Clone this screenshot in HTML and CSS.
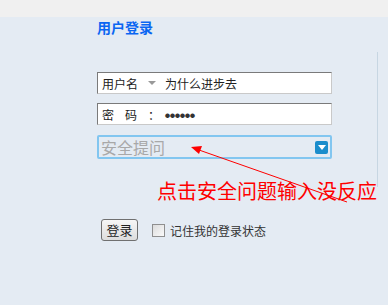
FILE: index.html
```html
<!DOCTYPE html>
<html lang="zh-CN">
<head>
    <meta charset="UTF-8">
    <title>用户登录</title>
    <link rel="stylesheet" href="styles.css">
</head>
<body>
    <div class="topbar"></div>
    <div class="panel">
        <div class="login">
            <h2 class="titulo">用户登录</h2>

            <div class="campo campo-user">
                <span class="etiqueta">用户名</span>
                <span class="caret"></span>
                <span class="valor">为什么进步去</span>
            </div>

            <div class="campo campo-pass">
                <span class="etiqueta pass">密<i></i>码<i></i>：</span>
                <span class="puntos">●●●●●●</span>
            </div>

            <div class="pregunta">
                <span class="placeholder">安全提问</span>
                <span class="flecha"></span>
            </div>

            <p class="nota">点击安全问题输入没反应</p>

            <div class="acciones">
                <button class="btn">登录</button>
                <label class="recordar"><span class="check"></span>记住我的登录状态</label>
            </div>
        </div>
        <div class="linea"></div>
    </div>

    <!-- flecha roja de la anotacion -->
    <svg class="anotacion" width="388" height="305" viewBox="0 0 388 305">
        <line x1="199" y1="150" x2="347" y2="202" stroke="#ff0000" stroke-width="1"/>
        <polygon points="191,147 202,146 199,154" fill="#ff0000"/>
    </svg>
</body>
</html>
```

FILE: styles.css
```css
* {
    margin: 0;
    padding: 0;
    box-sizing: border-box;
}

body {
    background: #e4ebf3;
    width: 388px;
    height: 305px;
    overflow: hidden;
    font-family: "Noto Sans CJK SC", "Noto Sans", sans-serif;
    color: #333;
    position: relative;
}

.topbar {
    height: 17px;
    background: #f0f0f0;
}

.panel {
    display: flex;
    padding-left: 97px;
}

.login {
    width: 235px;
}

.titulo {
    margin-top: 2px;
    font-size: 14px;
    line-height: 16px;
    font-weight: bold;
    color: #0a66f2;
}

.campo {
    display: flex;
    align-items: center;
    height: 22px;
    background: #fff;
    border: 1px solid #c9c9c9;
    border-top-color: #7a7a7a;
    border-left-color: #7a7a7a;
    padding-left: 4px;
    font-size: 12px;
    color: #222;
}

.campo-user { margin-top: 37px; }
.campo-pass { margin-top: 9px; }

.etiqueta { width: 46px; }

.campo-user .etiqueta { width: 46px; }

.caret {
    width: 0;
    height: 0;
    border-left: 4px solid transparent;
    border-right: 4px solid transparent;
    border-top: 4px solid #999;
    margin-right: 9px;
}

.pass {
    display: flex;
    width: 63px;
}

.pass i {
    width: 11px;
}

.puntos {
    font-size: 5px;
    letter-spacing: 0px;
    color: #333;
}

.pregunta {
    margin-top: 10px;
    height: 24px;
    display: flex;
    align-items: center;
    justify-content: space-between;
    border: 2px solid #82c6f0;
    border-radius: 2px;
    padding: 0 2px 0 2px;
}

.placeholder {
    font-size: 16px;
    line-height: 20px;
    color: #a8a8a8;
}

.flecha {
    width: 13px;
    height: 13px;
    background: #1a8dcc;
    border-radius: 2px;
    display: flex;
    justify-content: center;
    align-items: center;
}

.flecha::after {
    content: "";
    border-left: 4px solid transparent;
    border-right: 4px solid transparent;
    border-top: 5px solid #fff;
    margin-top: 1px;
}

.nota {
    margin-top: 20px;
    margin-left: 60px;
    width: 240px;
    font-size: 20px;
    line-height: 24px;
    color: #ff0000;
    white-space: nowrap;
}

.acciones {
    margin-top: 16px;
    margin-left: 4px;
    display: flex;
    align-items: center;
}

.btn {
    width: 37px;
    height: 22px;
    border: 1px solid #707070;
    border-radius: 3px;
    background: linear-gradient(#f6f6f6, #dddddd);
    font-family: inherit;
    font-size: 13px;
    line-height: 18px;
    color: #222;
}

.recordar {
    display: flex;
    align-items: center;
    margin-left: 14px;
    font-size: 12px;
    color: #333;
}

.check {
    width: 13px;
    height: 13px;
    border: 1px solid #8f8f8f;
    background: linear-gradient(135deg, #dcdcdc, #fafafa);
    margin-right: 5px;
}

.linea {
    width: 1px;
    height: 135px;
    margin-top: 35px;
    margin-left: 45px;
    background: #c7d6e2;
}

.anotacion {
    position: absolute;
    left: 0;
    top: 0;
    pointer-events: none;
}
```
